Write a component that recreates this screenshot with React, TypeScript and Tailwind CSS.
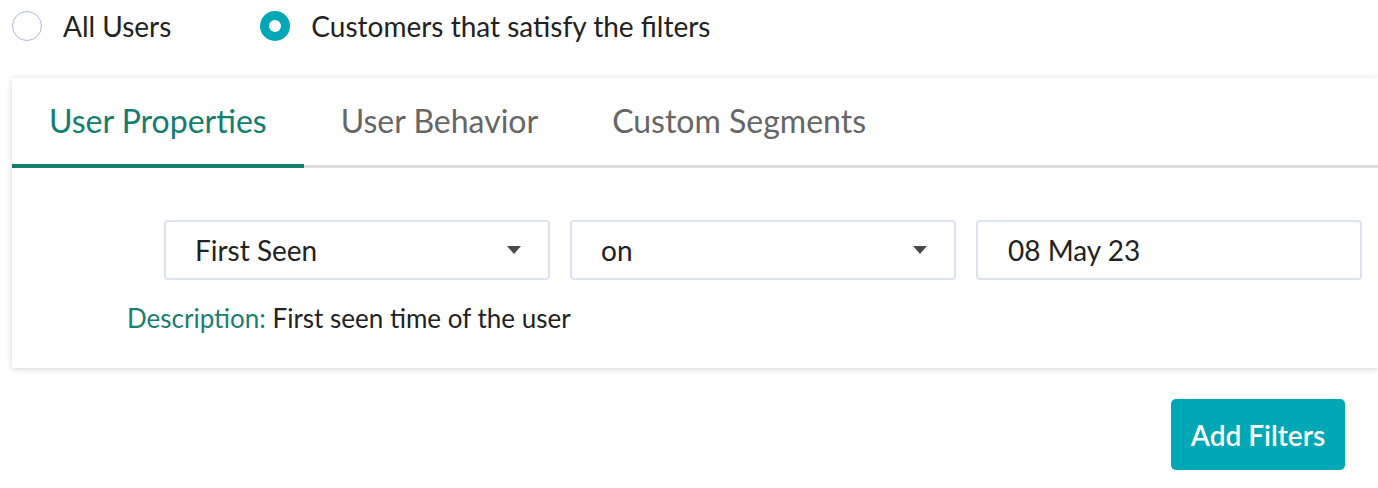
import { useState } from "react";

const tabs = ["User Properties", "User Behavior", "Custom Segments"];

function Caret() {
  return (
    <svg width="14" height="8" viewBox="0 0 14 8" className="shrink-0">
      <path d="M0 0 L14 0 L7 8 Z" fill="#4a4a4a" />
    </svg>
  );
}

function Select({ value }: { value: string }) {
  return (
    <div className="flex h-[60px] w-[386px] items-center justify-between rounded-[4px] border-2 border-[#dde3f0] bg-white pl-[29px] pr-[27px] text-[28px] text-[#222]">
      <span>{value}</span>
      <Caret />
    </div>
  );
}

export default function App() {
  const [mode, setMode] = useState("customers");
  const [active, setActive] = useState(0);

  return (
    <div className="h-[488px] w-[1378px] overflow-hidden bg-white font-['Lato',sans-serif] text-[#222]">
      <div className="flex h-[52px] items-center pl-[12px]">
        <button
          onClick={() => setMode("all")}
          className="flex items-center gap-[21px]"
        >
          <span className="h-[30px] w-[30px] rounded-full border-[1.5px] border-[#a9b9da]" />
          <span className="text-[28px]">All Users</span>
        </button>
        <button
          onClick={() => setMode("customers")}
          className="ml-[89px] flex items-center gap-[21px]"
        >
          <span className="flex h-[30px] w-[30px] items-center justify-center rounded-full bg-[#00a7b5]">
            <span className="h-[12px] w-[12px] rounded-full bg-white" />
          </span>
          <span className="text-[28px]">Customers that satisfy the filters</span>
        </button>
      </div>

      <div className="ml-[12px] mt-[26px] h-[290px] bg-white shadow-[0_1px_6px_rgba(0,0,0,0.18)]">
        <div className="flex h-[90px] border-b-[3px] border-[#dddddd]">
          {tabs.map((t, i) => (
            <button
              key={t}
              onClick={() => setActive(i)}
              className={`-mb-[3px] flex items-center px-[37px] text-[32px] ${
                active === i
                  ? "border-b-[4px] border-[#127e6f] text-[#127e6f]"
                  : "pb-[4px] text-[#666666]"
              }`}
            >
              {t}
            </button>
          ))}
        </div>

        <div className="pl-[152px] pt-[52px]">
          <div className="flex gap-[20px]">
            <Select value="First Seen" />
            <Select value="on" />
            <div className="flex h-[60px] w-[386px] items-center rounded-[4px] border-2 border-[#dde3f0] pl-[30px] text-[28px]">
              08 May 23
            </div>
          </div>
          <p className="-ml-[37px] mt-[22px] text-[26px] leading-[32px]">
            <span className="text-[#1a7f6f]">Description:</span> First seen time
            of the user
          </p>
        </div>
      </div>

      <div className="flex justify-end pr-[33px] pt-[31px]">
        <button className="h-[71px] w-[174px] rounded-[5px] bg-[#00a7b5] text-[28px] font-semibold text-white">
          Add Filters
        </button>
      </div>
    </div>
  );
}
